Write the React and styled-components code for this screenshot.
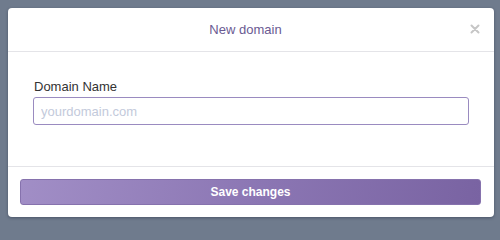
import React from 'react';
import styled, { createGlobalStyle } from 'styled-components';

const GlobalStyle = createGlobalStyle`
  html, body {
    margin: 0;
    padding: 0;
    background: #6f7b8d;
    overflow: hidden;
  }
  body {
    font-family: 'Liberation Sans', Arial, sans-serif;
  }
`;

const Backdrop = styled.div`
  height: 224px;
  box-sizing: border-box;
  padding: 8px 6px 7px 8px;
  background: #6f7b8d;
`;

const Modal = styled.div`
  background: #fff;
  border-radius: 4px;
  box-shadow: 0 1px 3px rgba(30, 40, 60, 0.45);
  display: flex;
  flex-direction: column;
  overflow: hidden;
`;

const Header = styled.div`
  height: 43px;
  padding-right: 11px;
  display: flex;
  align-items: center;
  justify-content: center;
  position: relative;
  border-bottom: 1px solid #e4e4e8;
`;

const Title = styled.h3`
  margin: 0;
  font-size: 13px;
  font-weight: 400;
  color: #6a5a92;
`;

const CloseButton = styled.button`
  position: absolute;
  right: 14px;
  top: 16px;
  width: 10px;
  height: 10px;
  padding: 0;
  border: 0;
  background: none;
  cursor: pointer;
  display: flex;
`;

const Body = styled.div`
  padding: 27px 25px 41px 25px;
  display: flex;
  flex-direction: column;
  gap: 2px;
  border-bottom: 1px solid #e4e4e8;
`;

const Label = styled.label`
  font-size: 13px;
  line-height: 16px;
  color: #333;
  padding-left: 1px;
`;

const Input = styled.input`
  box-sizing: border-box;
  width: 100%;
  height: 28px;
  padding: 0 7px;
  border: 1px solid #9a8bc0;
  border-radius: 3px;
  font-family: inherit;
  font-size: 13px;
  color: #333;
  outline: none;
  &::placeholder {
    color: #c3cadb;
  }
`;

const Footer = styled.div`
  padding: 12px 13px 12px 12px;
`;

const SaveButton = styled.button`
  display: block;
  width: 100%;
  height: 26px;
  border: 1px solid #8672ad;
  border-radius: 3px;
  background: linear-gradient(100deg, #a18ec6 0%, #8c77b4 50%, #7963a2 100%);
  color: #fff;
  font-family: inherit;
  font-size: 12px;
  font-weight: 700;
  cursor: pointer;
`;

const CloseIcon = () => (
  <svg width="10" height="10" viewBox="0 0 10 10">
    <path d="M1.5 1.5 L8.5 8.5 M8.5 1.5 L1.5 8.5" stroke="#c6c6c6" strokeWidth="2" strokeLinecap="round" />
  </svg>
);

const App = () => (
  <>
    <GlobalStyle />
    <Backdrop>
      <Modal>
        <Header>
          <Title>New domain</Title>
          <CloseButton aria-label="Close">
            <CloseIcon />
          </CloseButton>
        </Header>
        <Body>
          <Label htmlFor="domain">Domain Name</Label>
          <Input id="domain" placeholder="yourdomain.com" />
        </Body>
        <Footer>
          <SaveButton>Save changes</SaveButton>
        </Footer>
      </Modal>
    </Backdrop>
  </>
);

export default App;
